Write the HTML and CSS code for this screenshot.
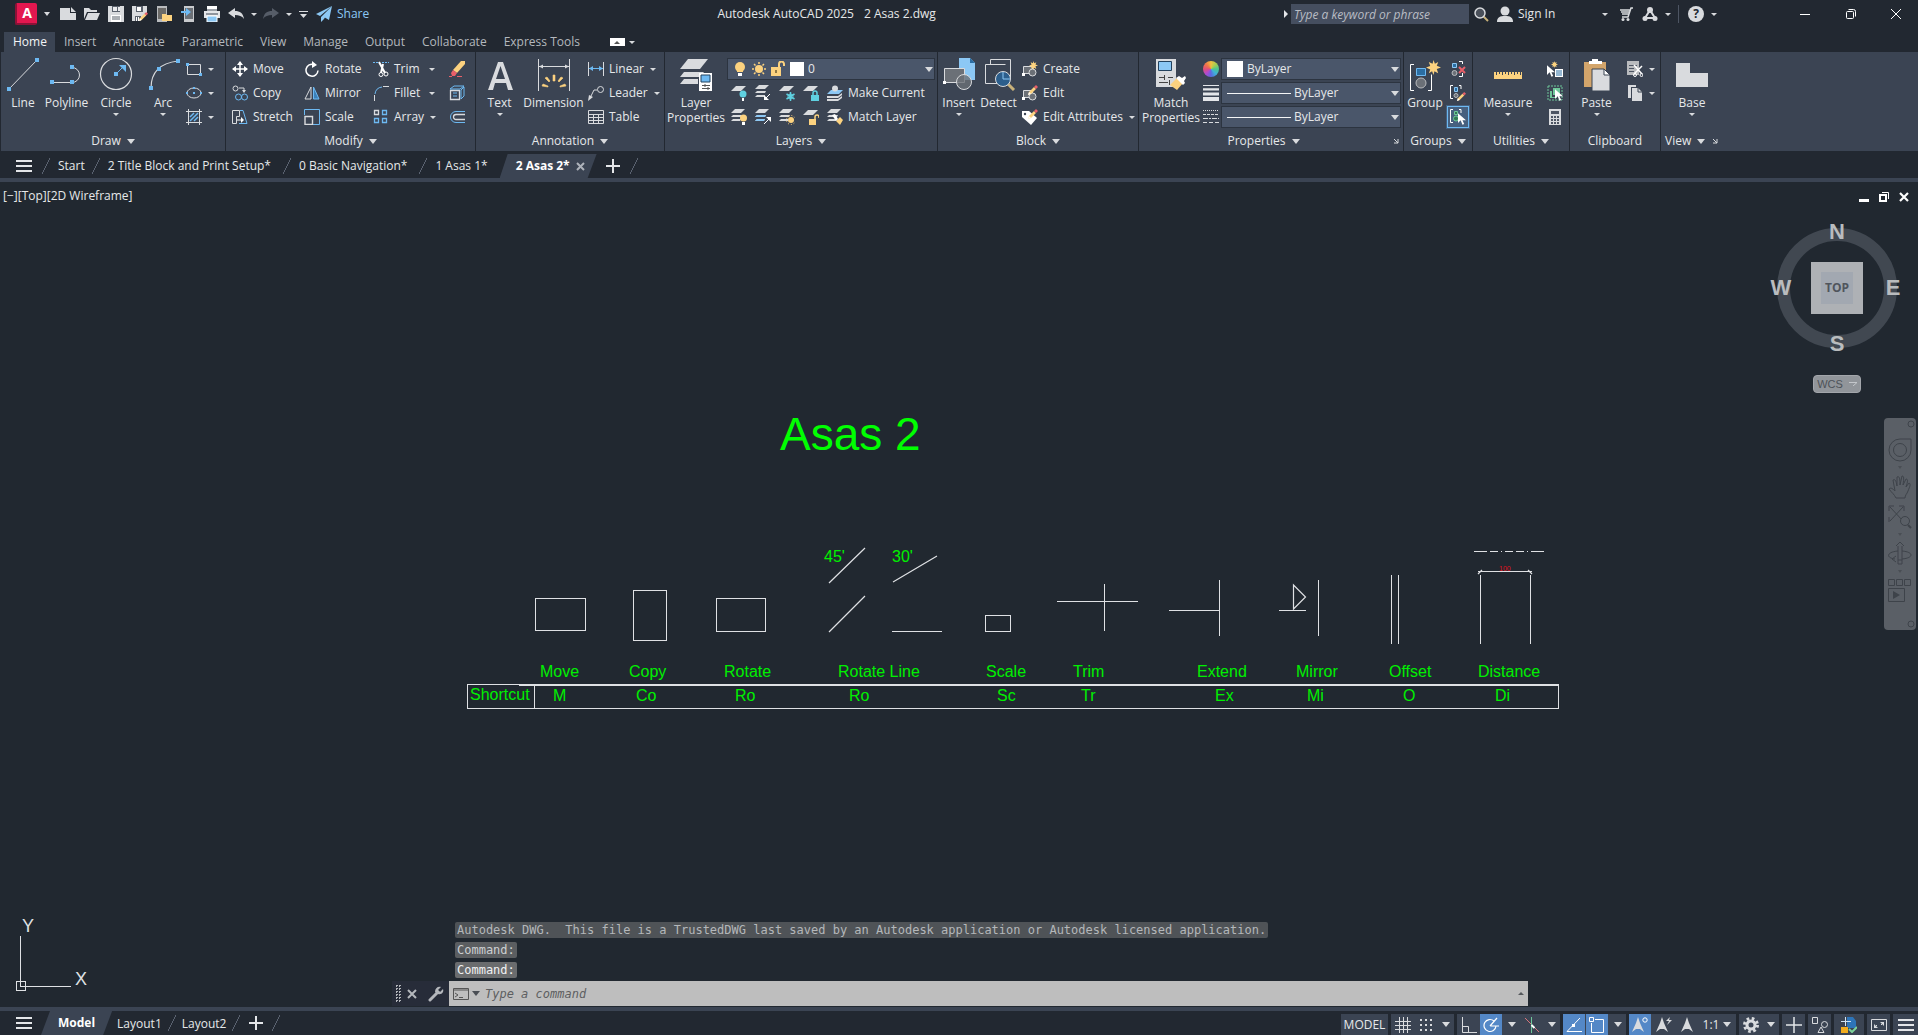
FILE: index.html
```html
<!DOCTYPE html>
<html lang="en">
<head>
<meta charset="utf-8">
<title>Autodesk AutoCAD 2025 - 2 Asas 2.dwg</title>
<link rel="stylesheet" href="styles.css">
</head>
<body>
<svg class="defs" aria-hidden="true">
  <defs>
    <symbol id="layers" viewBox="0 0 16 16"><path d="M4 0h10l-4 4H0z" fill="#d9dbde"/><path d="M2 6h9l-1 2H0zM2 10h8l-1 2H0z" fill="#d9dbde"/></symbol>
    <symbol id="sheet" viewBox="0 0 16 16"><path d="M5 1h10l-5 5H0z" fill="#d9dbde"/></symbol>
    <symbol id="pencil" viewBox="0 0 10 10"><path d="M0 10l1-3 5-5 2 2-5 5z" fill="#fcd27f"/><path d="M6 2l2-2 2 2-2 2z" fill="#e8606a"/><path d="M0 10l1-3 2 2z" fill="#fff"/></symbol>
    <symbol id="burst" viewBox="0 0 16 16"><path d="M8 0l1.500 4L13 2l-1.500 4L16 8l-4.500 1.500L13 14l-4-2-1 4-1.500-4L3 14l1.500-4L0 8l4.500-1.500L3 2l4 2z" fill="#fcd27f"/></symbol>
    <symbol id="cursor" viewBox="0 0 9 13"><path d="M0 0v11l3-3 2 5 2-1-2-4h4z" fill="#fff"/></symbol>
    <symbol id="blockshape" viewBox="0 0 16 16"><path d="M1.500 5.500h9v7h-9z" fill="#6b7077" stroke="#d9dbde"/><circle cx="10.500" cy="11.500" r="3.500" fill="#6b7077" stroke="#d9dbde"/><path d="M0 12h3v3H0z" fill="#fff"/></symbol>
    <symbol id="launch" viewBox="0 0 6 6"><path d="M1 1l4 4M5 1v4H1" fill="none" stroke="#d9dbde"/></symbol>
    <symbol id="northA" viewBox="0 0 16 16"><path d="M8 0l2 6 4 9-4-3H6l-4 3 4-9z" fill="#d9dbde"/></symbol>
    <symbol id="menu" viewBox="0 0 16 12"><path d="M0 1h16M0 6h16M0 11h16" stroke="#e4e6e9" stroke-width="2"/></symbol>
    <symbol id="plus" viewBox="0 0 14 14"><path d="M7 0v14M0 7h14" stroke="#e4e6e9" stroke-width="2"/></symbol>
  </defs>
</svg>

<header class="titlebar">
  <div class="quick">
    <button class="app" aria-label="Application menu"><span class="app-letter">A</span></button>
    <button class="drop drop-app" aria-label="Open application menu"><i class="caret mid"></i></button>
    <button class="qb" aria-label="New"><svg class="ic" viewBox="0 0 16 16"><path d="M0 2h10v5h6v7H0zM11 1l5 5h-5z" fill="#d9dbde"/></svg></button>
    <button class="qb" aria-label="Open"><svg class="ic" viewBox="0 0 16 16"><path d="M0 2h5l2 2h6v2H3L0 13zM4 7h12l-3 7H1z" fill="#d9dbde"/></svg></button>
    <button class="qb" aria-label="Save"><svg class="ic" viewBox="0 0 16 16"><path d="M0 0h16v16H0z" fill="#d9dbde"/><path d="M4 0h8v6H4z" fill="#5b626d"/><path d="M5 1h4v4H5zM10 1h2v4h-2z" fill="#e9eaec"/><path d="M3 9h10v7H3z" fill="#fff"/><path d="M4 11h8M4 13h8" stroke="#59606b"/></svg></button>
    <button class="qb" aria-label="Save As"><svg class="ic" viewBox="0 0 16 16"><path d="M0 0h15v8l-7 7H0z" fill="#d9dbde"/><path d="M4 0h7v6H4zM3 10h6v5H3z" fill="#5b626d"/><path d="M5 1h4v4H5zM4 11h1v4H4zM6 11h1v4H6z" fill="#fff"/><use href="#pencil" x="7" y="6" width="9" height="9"/></svg></button>
    <button class="qb" aria-label="Open from Web and Mobile"><svg class="ic" viewBox="0 0 16 16"><path d="M1 0h10v16H1z" fill="#b9bbbe"/><path d="M2 2h8v11H2z" fill="#6b6a68"/><path d="M6 8h4l1 1h5v6H6z" fill="#fcd27f"/></svg></button>
    <button class="qb" aria-label="Save to Web and Mobile"><svg class="ic" viewBox="0 0 16 16"><path d="M4 0h10v16H4z" fill="#c9cbce"/><path d="M5 2h8v11H5z" fill="#6b7077"/><path d="M1 5h5V2l5 4-5 4V7H1z" fill="#6db9f2"/></svg></button>
    <button class="qb" aria-label="Plot"><svg class="ic" viewBox="0 0 16 16"><path d="M3 0h10v5H3z" fill="#fff"/><path d="M0 5h16v7H0z" fill="#e4e6e9"/><path d="M3 4h10M2 8h12" stroke="#3b4453"/><path d="M3 10h10v6H3z" fill="#8cc8f5" stroke="#fff"/></svg></button>
    <button class="qb" aria-label="Undo"><svg class="ic" viewBox="0 0 16 16"><path d="M0 7l7-5v3c5 0 8 2 9 8-2-3-5-4-9-4v3z" fill="#d9dbde"/></svg></button>
    <button class="drop" aria-label="Undo list"><i class="caret"></i></button>
    <button class="qb" aria-label="Redo"><svg class="ic" viewBox="0 0 16 16"><path d="M16 7L9 2v3C4 5 1 7 0 13c2-3 5-4 9-4v3z" fill="#565d68"/></svg></button>
    <button class="drop" aria-label="Redo list"><i class="caret"></i></button>
    <button class="drop drop-wide" aria-label="Customize quick access"><svg width="9" height="7" viewBox="0 0 9 7"><path d="M0 0h9v1H0zM1 3h7L4.500 7z" fill="#d9dbde"/></svg></button>
    <button class="share"><svg class="ic" viewBox="0 0 16 16"><path d="M16 0L0 8l4 2zM16 0L5 11v5l3-3zM16 0L8 11l5 3z" fill="#8cc8f5"/></svg>Share</button>
  </div>
  <h1 class="title"><span>Autodesk AutoCAD 2025</span><span>2 Asas 2.dwg</span></h1>
  <div class="account">
    <button class="drop" aria-label="Collapse search"><svg width="4" height="8" viewBox="0 0 4 8"><path d="M0 0l4 4-4 4z" fill="#e4e6e9"/></svg></button>
    <input class="search" type="text" placeholder="Type a keyword or phrase" aria-label="Type a keyword or phrase">
    <button class="qb" aria-label="Search"><svg class="ic" viewBox="0 0 16 16"><path d="M10 10l5 5" stroke="#c9b27a" stroke-width="2"/><circle cx="7" cy="7" r="5" fill="#4a505a" stroke="#d9dbde" stroke-width="1.500"/></svg></button>
    <button class="signin"><svg class="ic" viewBox="0 0 16 16"><circle cx="8" cy="5" r="4.500" fill="#d9dbde"/><path d="M0 16c0-5 3-6 8-6s8 1 8 6z" fill="#d9dbde"/></svg><span>Sign In</span><i class="caret"></i></button>
    <button class="qb" aria-label="App store"><svg class="ic" viewBox="0 0 16 16"><path d="M15 2h-2l-3 9H4M2 4h10M3 6h9M4 8h7" fill="none" stroke="#d9dbde" stroke-width="1.500"/><circle cx="5" cy="13.500" r="1.500" fill="#d9dbde"/><circle cx="10" cy="13.500" r="1.500" fill="#d9dbde"/></svg></button>
    <button class="qb" aria-label="Autodesk account"><svg class="ic" viewBox="0 0 16 16"><path d="M8 4L3 12M8 4l5 8M4 12h8" fill="none" stroke="#d9dbde" stroke-width="2"/><circle cx="8" cy="4" r="3" fill="#d9dbde"/><circle cx="3" cy="12.500" r="2.500" fill="#d9dbde"/><circle cx="13" cy="12.500" r="2.500" fill="#d9dbde"/></svg></button>
    <button class="drop" aria-label="Account list"><i class="caret"></i></button>
    <span class="rule"></span>
    <button class="qb" aria-label="Help"><span class="help">?</span></button>
    <button class="drop" aria-label="Help list"><i class="caret"></i></button>
  </div>
  <div class="window">
    <button aria-label="Minimize"><svg width="10" height="10" viewBox="0 0 10 10"><path d="M0 5.500h10" stroke="#fff"/></svg></button>
    <button aria-label="Restore"><svg width="10" height="10" viewBox="0 0 10 10"><rect x=".5" y="2.500" width="7" height="7" rx="1" fill="none" stroke="#fff"/><path d="M2.500.5h5a2 2 0 0 1 2 2v5" fill="none" stroke="#fff"/></svg></button>
    <button aria-label="Close"><svg width="10" height="10" viewBox="0 0 10 10"><path d="M0 0l10 10M10 0L0 10" stroke="#fff"/></svg></button>
  </div>
</header>

<nav class="tabs">
  <a href="#" class="tab on">Home</a><a href="#" class="tab">Insert</a><a href="#" class="tab">Annotate</a><a href="#" class="tab">Parametric</a><a href="#" class="tab">View</a><a href="#" class="tab">Manage</a><a href="#" class="tab">Output</a><a href="#" class="tab">Collaborate</a><a href="#" class="tab">Express Tools</a>
  <button class="minimize" aria-label="Minimize ribbon"><i class="minbox"></i><i class="caret"></i></button>
</nav>

<section class="ribbon">
  <div class="panel p-draw">
    <div class="body">
      <button class="big"><svg class="bi" viewBox="0 0 34 34"><path d="M3 32L31 3" stroke="#d9dbde"/><path d="M1 30h4v4H1zM29 1h4v4h-4z" fill="#6db9f2"/></svg><span>Line</span></button>
      <button class="big"><svg class="bi" viewBox="0 0 34 34"><path d="M2 25.500h20a7.500 7.500 0 0 0 0-15" fill="none" stroke="#d9dbde"/><path d="M0 23h4v4H0zM20 23h4v4h-4zM20 8h4v4h-4z" fill="#6db9f2"/></svg><span>Polyline</span></button>
      <button class="big"><svg class="bi" viewBox="0 0 34 34"><circle cx="17" cy="17" r="15.500" fill="none" stroke="#d9dbde" stroke-width="1.200"/><path d="M15 15h4v4h-4zM20 8h7v7z" fill="#6db9f2"/><path d="M17 17l8-8" stroke="#6db9f2"/></svg><span>Circle</span><i class="caret"></i></button>
      <button class="big"><svg class="bi" viewBox="0 0 34 34"><path d="M5 31C5 15 15 6 32 4" fill="none" stroke="#d9dbde" stroke-width="1.200"/><path d="M3 29h4v4H3zM11 10h4v4h-4zM30 2h4v4h-4z" fill="#6db9f2"/></svg><span>Arc</span><i class="caret"></i></button>
      <div class="stack">
        <button class="sb" aria-label="Rectangle"><svg class="ic" viewBox="0 0 16 16"><path d="M1.500 3.500h13v10h-13z" fill="none" stroke="#d9dbde"/><path d="M0 2h3v3H0zM13 12h3v3h-3z" fill="#6db9f2"/></svg><i class="caret"></i></button>
        <button class="sb" aria-label="Ellipse"><svg class="ic" viewBox="0 0 16 16"><ellipse cx="8" cy="8" rx="7" ry="5" fill="none" stroke="#d9dbde"/><path d="M7 7h2v2H7zM0 7h2v2H0zM7 2h2v2H7zM14 7h2v2h-2z" fill="#6db9f2"/></svg><i class="caret"></i></button>
        <button class="sb" aria-label="Hatch"><svg class="ic" viewBox="0 0 16 16"><path d="M0 2.500h16M0 13.500h16M2.500 0v16M13.500 0v16" stroke="#d9dbde"/><path d="M4 8l4-4M4 12l8-8M8 12l4-4" stroke="#6db9f2" stroke-width="1.500"/></svg><i class="caret"></i></button>
      </div>
    </div>
    <button class="foot"><span>Draw</span><i class="caret wide"></i></button>
  </div>

  <div class="panel p-modify">
    <div class="body">
      <div class="stack">
        <button class="sb"><svg class="ic" viewBox="0 0 16 16"><path d="M8 1v14M1 8h14" stroke="#fff" stroke-width="1.500"/><path d="M8 0l3 4H5zM8 16l3-4H5zM0 8l4-3v6zM16 8l-4-3v6z" fill="#fff"/></svg>Move</button>
        <button class="sb"><svg class="ic" viewBox="0 0 16 16"><circle cx="3.500" cy="3.500" r="2.500" fill="none" stroke="#d9dbde"/><path d="M7 3h5v4" fill="none" stroke="#d9dbde"/><path d="M10 5h4l-2 3z" fill="#d9dbde"/><circle cx="6.500" cy="12" r="3" fill="none" stroke="#6db9f2"/><circle cx="12.500" cy="12" r="3" fill="none" stroke="#6db9f2"/></svg>Copy</button>
        <button class="sb"><svg class="ic" viewBox="0 0 16 16"><path d="M.5 1.500h7v6h-3v7h-4z" fill="none" stroke="#d9dbde"/><path d="M8 1.500h3l4 13H7" fill="none" stroke="#6db9f2"/><path d="M5 11h6" stroke="#fff"/><path d="M9 8l3 3-3 3z" fill="#fff"/></svg>Stretch</button>
      </div>
      <div class="stack">
        <button class="sb"><svg class="ic" viewBox="0 0 16 16"><path d="M10 3.500a6 6 0 1 0 4 6" fill="none" stroke="#fff" stroke-width="1.500"/><path d="M8 0l5 4-5 3z" fill="#fff"/></svg>Rotate</button>
        <button class="sb"><svg class="ic" viewBox="0 0 16 16"><path d="M7 2v12H1z" fill="none" stroke="#d9dbde"/><path d="M9.500 2v12H15z" fill="#3d81b8" stroke="#6db9f2"/></svg>Mirror</button>
        <button class="sb"><svg class="ic" viewBox="0 0 16 16"><path d="M.5.5h15v15H9M.5 6V.500" fill="none" stroke="#6db9f2"/><path d="M1 7.500h7.500v8H1z" fill="none" stroke="#d9dbde" stroke-width="1.400"/></svg>Scale</button>
      </div>
      <div class="stack">
        <button class="sb"><svg class="ic" viewBox="0 0 16 16"><path d="M0 1.500h6M9 1.500h7" stroke="#6db9f2" stroke-dasharray="2 1"/><path d="M6 1l6 11M10 3L8 12" stroke="#fff" stroke-width="2"/><circle cx="13" cy="13" r="2" fill="none" stroke="#fff"/><circle cx="8" cy="13.500" r="2" fill="none" stroke="#fff"/></svg>Trim<i class="caret far"></i></button>
        <button class="sb"><svg class="ic" viewBox="0 0 16 16"><path d="M2 9a8 8 0 0 1 7-7" fill="none" stroke="#6db9f2"/><path d="M10 1.500h6M1.500 10v6" stroke="#d9dbde"/></svg>Fillet<i class="caret far"></i></button>
        <button class="sb"><svg class="ic" viewBox="0 0 16 16"><path d="M1.500 1.500h4v4h-4z" fill="none" stroke="#d9dbde" stroke-width="1.300"/><path d="M9.500 1.500h4v4h-4zM1.500 9.500h4v4h-4zM9.500 9.500h4v4h-4z" fill="none" stroke="#6db9f2" stroke-width="1.300"/></svg>Array<i class="caret"></i></button>
      </div>
      <div class="stack">
        <button class="sb" aria-label="Erase"><svg class="ic" viewBox="0 0 16 16"><path d="M4 9l8-9h4v3l-8 9z" fill="#fcd27f"/><path d="M2 12l2-3 4 3-2 3H3z" fill="#e8606a"/><path d="M0 15.500h3M8 15.500h5" stroke="#e8606a"/></svg></button>
        <button class="sb" aria-label="Explode"><svg class="ic" viewBox="0 0 16 16"><path d="M1.500 5.500h9v9h-9z" fill="none" stroke="#d9dbde" stroke-width="1.300"/><path d="M1 4l4-3h10l-4 3zM12 14l3-3V2l-3 3zM4 8h4M4 11h4" fill="none" stroke="#6db9f2"/></svg></button>
        <button class="sb" aria-label="Offset"><svg class="ic" viewBox="0 0 16 16"><path d="M16 2.500H7a5.500 5.500 0 0 0 0 11h9" fill="none" stroke="#6db9f2"/><path d="M16 5.500H7a2.500 2.500 0 0 0 0 5h9" fill="none" stroke="#d9dbde" stroke-width="1.300"/></svg></button>
      </div>
    </div>
    <button class="foot"><span>Modify</span><i class="caret wide"></i></button>
  </div>

  <div class="panel p-annot">
    <div class="body">
      <button class="big"><svg class="bi" viewBox="0 0 34 34"><path d="M5 33L15 5h5l10 28h-5l-2-7H12l-2 7zM13 22h9L17.500 9z" fill="#d9dbde" fill-rule="evenodd"/></svg><span>Text</span><i class="caret"></i></button>
      <button class="big"><svg class="bi" viewBox="0 0 34 34"><path d="M1.500 2v32M32.500 2v32M2 9.500h30" stroke="#d9dbde"/><path d="M2 9.500l4-2v4zM32 9.500l-4-2v4z" fill="#d9dbde"/><path d="M16 18h2v6h-2zM8 21l2-1 3 4-1 1zM26 21l-2-1-3 4 1 1zM5 29l1-2 5 2v1zM29 29l-1-2-5 2v1z" fill="#fcd27f" stroke="#fcd27f" stroke-width=".6"/></svg><span>Dimension</span></button>
      <div class="stack">
        <button class="sb"><svg class="ic" viewBox="0 0 16 16"><path d="M.5 1v14M15.500 1v14" stroke="#d9dbde"/><path d="M1 7.500h14" stroke="#6db9f2"/><path d="M1 7.500L5 5v5zM15 7.500L11 5v5z" fill="#6db9f2"/></svg>Linear<i class="caret"></i></button>
        <button class="sb"><svg class="ic" viewBox="0 0 16 16"><circle cx="12.500" cy="4.500" r="3" fill="none" stroke="#d9dbde"/><path d="M9 5H6L2 13" fill="none" stroke="#d9dbde"/><path d="M0 16l1-6 4 2z" fill="#d9dbde"/></svg>Leader<i class="caret"></i></button>
        <button class="sb"><svg class="ic" viewBox="0 0 16 16"><path d="M.5 1.500h15v13H.5zM.5 5.500h15M.5 8.500h15M.5 11.500h15M5.500 5v9M10.500 5v9" fill="none" stroke="#d9dbde"/></svg>Table</button>
      </div>
    </div>
    <button class="foot"><span>Annotation</span><i class="caret wide"></i></button>
  </div>

  <div class="panel p-layers">
    <div class="body">
      <button class="big"><svg class="bi" viewBox="0 0 34 34"><path d="M9 2h20l-8 10H1z" fill="#d9dbde"/><path d="M5 15h20l-4 5H1zM5 22h14v5H1z" fill="#d9dbde"/><path d="M20 16h13v18H20z" fill="#fff"/><path d="M22 18h9v7h-9z" fill="#6db9f2" stroke="#23425e"/><path d="M23 28.500h8M23 31.500h8M26 27v3M29 30v3" stroke="#555"/></svg><span>Layer<br>Properties</span></button>
      <div class="stack">
        <div class="row"><div class="combo combo-layer">
          <svg class="ci" viewBox="0 0 14 16"><circle cx="7" cy="6" r="5" fill="#fcd27f"/><path d="M4 9h6v2H4z" fill="#fcd27f"/><path d="M5 12h4v3H5z" fill="#fff"/></svg>
          <svg class="ci" viewBox="0 0 14 16"><circle cx="7" cy="8" r="4" fill="#fcd27f"/><path d="M7 1v2M7 13v2M0 8h2M12 8h2M2 3l1.500 1.500M10.500 11.500L12 13M12 3l-1.500 1.500M3.500 11.500L2 13" stroke="#fcd27f" stroke-width="1.500"/></svg>
          <svg class="ci" viewBox="0 0 14 16"><path d="M0 6h10v9H0z" fill="#fcd27f"/><path d="M8 7V3a2.500 2.500 0 0 1 5 0v2" fill="none" stroke="#fcd27f" stroke-width="2"/><path d="M5 9v3" stroke="#6b5a30" stroke-width="1.500"/></svg>
          <svg class="ci" viewBox="0 0 14 16"><path d="M0 1h14v14H0z" fill="#fff"/></svg>
          <select aria-label="Layer"><option>0</option></select><i class="caret wide"></i>
        </div></div>
        <div class="row">
          <button class="sb" aria-label="Layer off"><svg class="ic" viewBox="0 0 16 16"><use href="#sheet" y="0"/><circle cx="12" cy="9" r="3.500" fill="#5fd0e0"/><path d="M11 13h2v3h-2z" fill="#fff"/></svg></button>
          <button class="sb" aria-label="Isolate layer"><svg class="ic" viewBox="0 0 16 16"><use href="#layers"/><path d="M15 9l-5 5" stroke="#fff"/><path d="M9 15v-5l5 5z" fill="#fff"/></svg></button>
          <button class="sb" aria-label="Freeze layer"><svg class="ic" viewBox="0 0 16 16"><use href="#sheet"/><path d="M11.500 7v9M7.500 9l8 5M15.500 9l-8 5" stroke="#5fd0e0" stroke-width="1.500"/><circle cx="11.500" cy="11.500" r="2.500" fill="none" stroke="#5fd0e0"/></svg></button>
          <button class="sb" aria-label="Lock layer"><svg class="ic" viewBox="0 0 16 16"><use href="#sheet"/><path d="M8 10h8v6H8z" fill="#5fd0e0"/><path d="M10 10V8a2 2 0 0 1 4 0v2" fill="none" stroke="#5fd0e0" stroke-width="1.500"/></svg></button>
          <button class="sb"><svg class="ic" viewBox="0 0 16 16"><path d="M4 5h12l-4 4H0z" fill="#8cc8f5"/><circle cx="8" cy="3.500" r="3" fill="#d9dbde"/><path d="M0 11h11l4-3v2l-4 3H0zM0 14h11l4-3v2l-4 3H0z" fill="#d9dbde"/></svg>Make Current</button>
        </div>
        <div class="row">
          <button class="sb" aria-label="Turn all layers on"><svg class="ic" viewBox="0 0 16 16"><use href="#layers"/><circle cx="12.500" cy="9" r="3.500" fill="#fcd27f"/><path d="M11 13h3v3h-3z" fill="#fff"/></svg></button>
          <button class="sb" aria-label="Unisolate layer"><svg class="ic" viewBox="0 0 16 16"><use href="#layers"/><path d="M2 6h9l-1 2H0zM2 10h8l-1 2H0z" fill="#8cc8f5"/><path d="M9 15l5-5" stroke="#fff"/><path d="M11 8h5v5z" fill="#fff"/></svg></button>
          <button class="sb" aria-label="Thaw all layers"><svg class="ic" viewBox="0 0 16 16"><use href="#layers"/><circle cx="12" cy="11" r="3" fill="#fcd27f"/><circle cx="12" cy="11" r="4.500" fill="none" stroke="#fcd27f" stroke-dasharray="1 2"/></svg></button>
          <button class="sb" aria-label="Unlock layer"><svg class="ic" viewBox="0 0 16 16"><use href="#sheet"/><path d="M6 10h7v6H6z" fill="#fcd27f"/><path d="M12 10V8a2 2 0 0 1 4 0v1" fill="none" stroke="#fcd27f" stroke-width="1.500"/></svg></button>
          <button class="sb"><svg class="ic" viewBox="0 0 16 16"><use href="#layers"/><path d="M9 12l4-4 3 3-3 5z" fill="#fcd27f"/><path d="M5 6l3-1 3 5-2 2z" fill="#fff"/></svg>Match Layer</button>
        </div>
      </div>
    </div>
    <button class="foot"><span>Layers</span><i class="caret wide"></i></button>
  </div>

  <div class="panel p-block">
    <div class="body">
      <button class="big"><svg class="bi" viewBox="0 0 34 34"><path d="M17 1h11l5 5v17H17z" fill="#8cc8f5"/><path d="M28 1v5h5z" fill="#2b6ea3"/><path d="M2.500 11.500h20v14h-20z" fill="#6b7077" stroke="#d9dbde"/><circle cx="22" cy="25" r="7.500" fill="#6b7077" fill-opacity=".8" stroke="#d9dbde"/><path d="M1 24h3v3H1z" fill="#fff"/></svg><span>Insert</span><i class="caret"></i></button>
      <button class="big"><svg class="bi" viewBox="0 0 34 34"><path d="M8.500 8V2.500h20V22M3.500 7.500h20M3.500 7.500v19h12" fill="none" stroke="#d9dbde"/><path d="M26 27l6 6" stroke="#c9b27a" stroke-width="3"/><circle cx="21" cy="22" r="7.500" fill="#2b5e8c" stroke="#d9dbde"/><path d="M21 15v7h7" fill="none" stroke="#8cc8f5"/></svg><span>Detect</span></button>
      <div class="stack">
        <button class="sb"><svg class="ic" viewBox="0 0 16 16"><use href="#blockshape"/><use href="#burst" x="7" y="0" width="9" height="9"/></svg>Create</button>
        <button class="sb"><svg class="ic" viewBox="0 0 16 16"><use href="#blockshape"/><use href="#pencil" x="6" y="0" width="10" height="10"/></svg>Edit</button>
        <button class="sb"><svg class="ic" viewBox="0 0 16 16"><path d="M0 2h7l8 7-6 7-9-8z" fill="#fff"/><circle cx="3" cy="5" r="1.200" fill="#3b4453"/><use href="#pencil" x="6" y="0" width="10" height="10"/></svg>Edit Attributes<i class="caret"></i></button>
      </div>
    </div>
    <button class="foot"><span>Block</span><i class="caret wide"></i></button>
  </div>

  <div class="panel p-props">
    <div class="body">
      <button class="big"><svg class="bi" viewBox="0 0 34 34"><path d="M2 2h20v28H2z" fill="#d9dbde"/><path d="M4.500 4.500h13v9h-13z" fill="#8cc8f5" stroke="#23425e"/><path d="M5 20.500h6M14 20.500h5M5 25.500h9M10.500 18v5M15.500 23v5" stroke="#444"/><path d="M16 28l7-7 6 5-6 7z" fill="#fcd27f"/><path d="M22 21l3-2 3 2 3-2 1 2-2 3 1 2-2 2z" fill="#fff"/></svg><span>Match<br>Properties</span></button>
      <div class="stack">
        <div class="row"><span class="wheel"></span><div class="combo combo-color"><i class="swatch"></i><select aria-label="Object color"><option>ByLayer</option></select><i class="caret wide"></i></div></div>
        <div class="row"><svg class="ic" viewBox="0 0 16 16"><path d="M0 .5h16M0 4h16M0 8.500h16M0 14h16" stroke="#e4e6e9"/><path d="M0 4.500h16" stroke="#e4e6e9" stroke-width="2"/><path d="M0 9h16" stroke="#e4e6e9" stroke-width="3"/><path d="M0 14h16" stroke="#e4e6e9" stroke-width="4"/></svg><div class="combo"><i class="line"></i><select aria-label="Lineweight"><option>ByLayer</option></select><i class="caret wide"></i></div></div>
        <div class="row"><svg class="ic" viewBox="0 0 16 16"><path d="M0 1.500h16" stroke="#d9dbde" stroke-dasharray="1 1"/><path d="M0 5.500h16" stroke="#d9dbde" stroke-dasharray="3 1"/><path d="M0 9.500h16" stroke="#d9dbde" stroke-dasharray="5 1 2 1"/><path d="M0 13.500h16" stroke="#d9dbde" stroke-dasharray="4 2"/></svg><div class="combo"><i class="line"></i><select aria-label="Linetype"><option>ByLayer</option></select><i class="caret wide"></i></div></div>
      </div>
    </div>
    <div class="footrow"><button class="foot"><span>Properties</span><i class="caret wide"></i></button><button class="dialog" aria-label="Properties dialog"><svg width="6" height="6"><use href="#launch"/></svg></button></div>
  </div>

  <div class="panel p-groups">
    <div class="body">
      <button class="big"><svg class="bi" viewBox="0 0 34 34"><path d="M6 7.500H2.500v26H6M20 33.500h3.500v-16M21 33.500h2" fill="none" stroke="#fff"/><path d="M8.500 11.500h9v7h-9z" fill="#2b6ea3" stroke="#6db9f2"/><circle cx="13" cy="26" r="5" fill="#6b7077" stroke="#b9bbbe"/><use href="#burst" x="18" y="3" width="15" height="15"/></svg><span>Group</span></button>
      <div class="stack">
        <button class="sb" aria-label="Ungroup"><svg class="ic" viewBox="0 0 16 16"><path d="M2.500 2.500h4v4h-4z" fill="#2b6ea3" stroke="#8cc8f5"/><circle cx="4.500" cy="12" r="2.500" fill="#6b7077" stroke="#b9bbbe"/><path d="M9 .500h3.500V3M12.500 12v3.500H9" fill="none" stroke="#fff"/><path d="M9 6l6 6M15 6l-6 6" stroke="#e8606a" stroke-width="2"/></svg></button>
        <button class="sb" aria-label="Group edit"><svg class="ic" viewBox="0 0 16 16"><path d="M3 .5H.500v13H3M9 .500h2V4" fill="none" stroke="#fff"/><path d="M4.500 2.500h3v4h-3z" fill="#2b6ea3" stroke="#8cc8f5"/><circle cx="6" cy="10.500" r="2" fill="#6b7077" stroke="#b9bbbe"/><use href="#pencil" x="7" y="7" width="9" height="9"/></svg></button>
        <button class="sb picked" aria-label="Group selection on/off"><svg class="ic" viewBox="0 0 16 16"><path d="M3 .5H.500v13H3M9 .500h2V4" fill="none" stroke="#fff"/><path d="M4.500 2.500h3v3h-3z" fill="#2f7a55" stroke="#6fc79a"/><circle cx="6" cy="9.500" r="2.500" fill="#2f7a55" stroke="#6fc79a"/><use href="#cursor" x="8" y="4" width="8" height="12"/></svg></button>
      </div>
    </div>
    <button class="foot"><span>Groups</span><i class="caret wide"></i></button>
  </div>

  <div class="panel p-utils">
    <div class="body">
      <button class="big"><svg class="bi" viewBox="0 0 34 34"><path d="M3 15h28v7H3z" fill="#fcd27f"/><path d="M5.500 15v3M8.500 15v2M11.500 15v3M14.500 15v2M17.500 15v3M20.500 15v2M23.500 15v3M26.500 15v2M29.500 15v3" stroke="#3b4453"/></svg><span>Measure</span><i class="caret"></i></button>
      <div class="stack">
        <button class="sb" aria-label="Quick select"><svg class="ic" viewBox="0 0 16 16"><path d="M8 8h8v8H8z" fill="#fff"/><path d="M9 10h6M9 12h6M9 14h6" stroke="#2b6ea3"/><use href="#cursor" x="0" y="4" width="8" height="12"/><use href="#burst" x="4" y="0" width="7" height="7"/></svg></button>
        <button class="sb" aria-label="Select all"><svg class="ic" viewBox="0 0 16 16"><path d="M1 1h14v14H1z" fill="none" stroke="#6fc79a" stroke-dasharray="2 1"/><path d="M6 3h7v7H6zM3 6h2v6h5v1H3z" fill="#6fc79a"/><use href="#cursor" x="8" y="4" width="8" height="12"/></svg></button>
        <button class="sb" aria-label="Quick calculator"><svg class="ic" viewBox="0 0 16 16"><path d="M2 0h12v16H2z" fill="#d9dbde"/><path d="M4 2h8v3H4zM4 7h2v2H4zM7 7h2v2H7zM10 7h2v2h-2zM4 10h2v2H4zM7 10h2v2H7zM10 10h2v2h-2zM4 13h2v2H4zM7 13h2v2H7zM10 13h2v2h-2z" fill="#4d5563"/></svg></button>
      </div>
    </div>
    <button class="foot"><span>Utilities</span><i class="caret wide"></i></button>
  </div>

  <div class="panel p-clip">
    <div class="body">
      <button class="big"><svg class="bi" viewBox="0 0 34 34"><path d="M4 5h22v25H4z" fill="#d3a56b"/><path d="M12 2h6v2h4v3H9V4h3z" fill="#fff"/><path d="M12 12h12l6 6v16H12z" fill="#d9dbde" stroke="#3b4453"/><path d="M24 12v6h6z" fill="#fff" stroke="#3b4453"/></svg><span>Paste</span><i class="caret"></i></button>
      <div class="stack">
        <button class="sb" aria-label="Cut"><svg class="ic" viewBox="0 0 16 16"><path d="M0 0h12v14H0z" fill="#b9bbbe"/><path d="M2 4.500h8M2 7.500h5M2 10.500h5" stroke="#4d5563"/><path d="M7 4l8 9M15 5l-8 8" stroke="#fff" stroke-width="1.500"/><circle cx="8" cy="14" r="1.500" fill="none" stroke="#fff"/><circle cx="14.500" cy="14" r="1.500" fill="none" stroke="#fff"/></svg><i class="caret"></i></button>
        <button class="sb" aria-label="Copy clip"><svg class="ic" viewBox="0 0 16 16"><path d="M1 0h8v2H4v11H1z" fill="#d9dbde"/><path d="M5 3h6l4 4v9H5z" fill="#d9dbde"/><path d="M11 3v4h4" fill="none" stroke="#3b4453"/></svg><i class="caret"></i></button>
      </div>
    </div>
    <div class="foot"><span>Clipboard</span></div>
  </div>

  <div class="panel p-view">
    <div class="body">
      <button class="big"><svg class="bi" viewBox="0 0 34 34"><path d="M1 6h14v10h18v14H1z" fill="#d9dbde"/></svg><span>Base</span><i class="caret"></i></button>
    </div>
    <div class="footrow"><button class="foot"><span>View</span><i class="caret wide"></i></button><button class="dialog" aria-label="View dialog"><svg width="6" height="6"><use href="#launch"/></svg></button></div>
  </div>
</section>

<nav class="files">
  <button class="burger" aria-label="File tab menu"><svg width="16" height="12"><use href="#menu"/></svg></button>
  <a href="#" class="file f-start">Start</a>
  <a href="#" class="file">2 Title Block and Print Setup*</a>
  <a href="#" class="file">0 Basic Navigation*</a>
  <a href="#" class="file">1 Asas 1*</a>
  <span class="file-on"><a href="#">2 Asas 2*</a><button aria-label="Close tab"><svg width="9" height="9" viewBox="0 0 9 9"><path d="M1 1l7 7M8 1L1 8" stroke="#aeb3bb" stroke-width="2"/></svg></button></span>
  <button class="add" aria-label="New tab"><svg width="14" height="14"><use href="#plus"/></svg></button>
  <i class="slash"></i>
</nav>

<main class="canvas">
  <svg class="drawing" role="img" aria-label="Model space">
    <g fill="none" stroke="#dfe1e4" shape-rendering="crispEdges">
      <path d="M535.500 416.500h50v32h-50zM633.500 408.500h33v50h-33zM716.500 416.500h49v33h-49zM892 449.500h50M985.500 433.500h25v16h-25z"/>
      <path d="M1057 419.500h81M1104.500 402v47M1169 428.500h50M1219.500 398v56M1279 428.500h27M1318.500 398v56M1391.500 393v69M1398.500 393v69M1480.500 393v69M1530.500 393v69M1478 389.500h54"/>
      <path d="M1474 369.500h13M1490 369.500h8M1501 369.500h1M1505 369.500h8M1516 369.500h8M1527 369.500h1M1531 369.500h13"/>
      <path d="M467.500 502.500h1091v24H467.500zM519 503.500h1040M534.500 503v23"/>
      <path d="M20.500 754v50h50M16.500 799.500h9v9h-9z"/>
    </g>
    <path d="M829 401l36-35M893 400l44-26M829 450l36-36M1293.500 403v24l12-12zM1478 392l4-4M1528 388l4 4" fill="none" stroke="#dfe1e4" stroke-width="1.200"/>
    <text class="axis" x="22" y="750">Y</text><text class="axis" x="75" y="803">X</text>
    <g class="note">
      <text class="heading" x="780" y="268">Asas 2</text>
      <text x="824" y="380">45'</text><text x="892" y="380">30'</text>
      <text x="540" y="495">Move</text><text x="629" y="495">Copy</text><text x="724" y="495">Rotate</text><text x="838" y="495">Rotate Line</text><text x="986" y="495">Scale</text><text x="1073" y="495">Trim</text><text x="1197" y="495">Extend</text><text x="1296" y="495">Mirror</text><text x="1389" y="495">Offset</text><text x="1478" y="495">Distance</text>
      <text x="470" y="518">Shortcut</text><text x="553" y="519">M</text><text x="636" y="519">Co</text><text x="735" y="519">Ro</text><text x="849" y="519">Ro</text><text x="997" y="519">Sc</text><text x="1081" y="519">Tr</text><text x="1215" y="519">Ex</text><text x="1307" y="519">Mi</text><text x="1403" y="519">O</text><text x="1495" y="519">Di</text>
    </g>
    <text class="dim" x="1499" y="389">100</text>
  </svg>

  <div class="viewlabel"><button>[−]</button><button>[Top]</button><button>[2D Wireframe]</button></div>

  <div class="childwin">
    <button aria-label="Minimize drawing"><svg width="10" height="10" viewBox="0 0 10 10"><path d="M0 7h10v3H0z" fill="#fff"/></svg></button>
    <button aria-label="Restore drawing"><svg width="10" height="10" viewBox="0 0 10 10"><path d="M1 3h6v6H1z" fill="none" stroke="#fff" stroke-width="2"/><path d="M3 .500h6.500V7" fill="none" stroke="#fff"/></svg></button>
    <button aria-label="Close drawing"><svg width="10" height="10" viewBox="0 0 10 10"><path d="M1 1l8 8M9 1L1 9" stroke="#fff" stroke-width="2.200"/></svg></button>
  </div>

  <div class="cube">
    <span class="n">N</span><span class="w">W</span><button class="face"><span>TOP</span></button><span class="e">E</span><span class="s">S</span>
  </div>
  <button class="wcs">WCS<svg width="8" height="4" viewBox="0 0 8 4"><path d="M0 .500h8L4 4" fill="none" stroke="#c3c6ca"/></svg></button>

  <div class="navbar">
    <button class="dot" aria-label="Close navigation bar"><svg width="8" height="8" viewBox="0 0 8 8"><circle cx="4" cy="4" r="3" fill="none" stroke="#3e434a"/></svg></button>
    <button class="nb" aria-label="Full navigation wheel"><svg width="24" height="24" viewBox="0 0 24 24"><path d="M12 1h11v11A11 11 0 1 1 12 1z" fill="none" stroke="#3e434a"/><circle cx="12" cy="12" r="6.500" fill="none" stroke="#3e434a"/></svg><i class="caret dark"></i></button>
    <button class="nb" aria-label="Pan"><svg width="24" height="24" viewBox="0 0 24 24"><path d="M8 23c-2-4-4-5-7-9 2-2 4 0 6 2L5 5c2-1 3 0 4 6V2c2-1 3 0 3 8l2-9c2 0 2 2 1 9l3-6c2 0 2 2 0 8l3-4c2 1 1 3-1 8-1 3-3 4-3 7z" fill="none" stroke="#3e434a"/></svg></button>
    <button class="nb" aria-label="Zoom"><svg width="24" height="24" viewBox="0 0 24 24"><path d="M2 2l13 14M15 2L2 16M1 6V1h5M11 1h5v5M1 12v5" fill="none" stroke="#3e434a"/><circle cx="17" cy="16" r="4.500" fill="#5a5f66" stroke="#3e434a"/><path d="M20 20l3 3" stroke="#3e434a" stroke-width="2"/></svg><i class="caret dark"></i></button>
    <button class="nb" aria-label="Orbit"><svg width="24" height="24" viewBox="0 0 24 24"><path d="M10 4v14M14 4v14M8 4l4-4 4 4M10 18h4v4h-4z" fill="none" stroke="#3e434a"/><path d="M10 9C-2 10-2 16 7 17M14 9c12 1 12 7 0 8M8 14l-4 3 4 3" fill="none" stroke="#3e434a"/></svg><i class="caret dark"></i></button>
    <button class="nb" aria-label="ShowMotion"><svg width="24" height="24" viewBox="0 0 24 24"><path d="M.5.500h6v6h-6zM8.500.500h6v6h-6zM16.500.500h6v6h-6zM.5 9.500h16v13H.5z" fill="none" stroke="#3e434a"/><path d="M5 12v8l7-4z" fill="#3e434a"/></svg></button>
    <button class="dot end" aria-label="Customize navigation bar"><svg width="8" height="8" viewBox="0 0 8 8"><circle cx="4" cy="4" r="3" fill="none" stroke="#3e434a"/></svg></button>
  </div>

  <section class="command">
    <ol class="history"><li class="h1">Autodesk DWG.&nbsp; This file is a TrustedDWG last saved by an Autodesk application or Autodesk licensed application.</li><li class="h2">Command:</li><li class="h3">Command:</li></ol>
    <div class="cmdline">
      <span class="grip"></span>
      <button class="cx" aria-label="Close command line"><svg width="10" height="10" viewBox="0 0 10 10"><path d="M1 1l8 8M9 1L1 9" stroke="#b4b7bc" stroke-width="2"/></svg></button>
      <button class="cw" aria-label="Customize"><svg width="16" height="16" viewBox="0 0 16 16"><path d="M2 14l8-8" stroke="#b4b7bc" stroke-width="3" stroke-linecap="round"/><path d="M13 1L10 4l2 2 3-3c1 3-1 6-5 5L7 6c0-4 3-6 6-5z" fill="#b4b7bc"/></svg></button>
      <label class="prompt"><svg width="16" height="12" viewBox="0 0 16 12"><path d="M.5.500h15v11H.5zM0 2h16" fill="none" stroke="#555"/><path d="M2 5l3 2-3 2M6 9.500h4" fill="none" stroke="#555"/></svg><i class="caret wide dark"></i><input type="text" placeholder="Type a command" aria-label="Type a command"><i class="caret up"></i></label>
    </div>
  </section>
</main>

<footer class="status">
  <nav class="layouts">
    <button class="burger" aria-label="Layout menu"><svg width="16" height="12"><use href="#menu"/></svg></button>
    <a href="#" class="layout-on">Model</a>
    <a href="#" class="layout">Layout1</a><i class="slash"></i>
    <a href="#" class="layout">Layout2</a><i class="slash"></i>
    <button class="add" aria-label="New layout"><svg width="14" height="14"><use href="#plus"/></svg></button><i class="slash"></i>
  </nav>
  <div class="toggles">
    <div class="grp"><button class="model">MODEL</button></div>
    <div class="grp"><button aria-label="Grid"><svg class="ic" viewBox="0 0 16 16"><path d="M4.500 0v16M8.500 0v16M12.500 0v16M0 4.500h16M0 8.500h16M0 12.500h16" stroke="#d9dbde"/></svg></button><button aria-label="Snap"><svg class="ic" viewBox="0 0 16 16"><path d="M2 2h2v2H2zM7 2h2v2H7zM12 2h2v2h-2zM2 7h2v2H2zM7 7h2v2H7zM12 7h2v2h-2zM2 12h2v2H2zM7 12h2v2H7zM12 12h2v2h-2z" fill="#d9dbde"/></svg></button><button class="dd" aria-label="Snap list"><i class="caret wide"></i></button></div>
    <div class="grp"><button aria-label="Ortho"><svg class="ic" viewBox="0 0 16 16"><path d="M1.500 0v15.500H16M1.500 9.500h6v6" fill="none" stroke="#d9dbde"/></svg></button><button class="lit" aria-label="Polar tracking"><svg class="ic" viewBox="0 0 16 16"><path d="M11 4a6 6 0 1 0 2 5M7 9h9M7 9l7-8" fill="none" stroke="#fff" stroke-width="1.200"/></svg></button><button class="dd" aria-label="Polar list"><i class="caret wide"></i></button><button aria-label="Isometric drafting"><svg class="ic" viewBox="0 0 16 16"><path d="M1 1l14 14" stroke="#d8767c"/><path d="M7.500 0v16" stroke="#6fc79a"/><path d="M7.500 8l3 3" stroke="#fff" stroke-width="2"/></svg></button><button class="dd" aria-label="Isometric list"><i class="caret wide"></i></button></div>
    <div class="grp"><button class="lit" aria-label="Object snap tracking"><svg class="ic" viewBox="0 0 16 16"><path d="M14 1L1 14.500h15" fill="none" stroke="#fff"/><path d="M6 7h3v3H6z" fill="#fff"/></svg></button><button class="lit" aria-label="Object snap"><svg class="ic" viewBox="0 0 16 16"><path d="M6 2.500h8.500v13h-12V6" fill="none" stroke="#fff"/><path d="M.5.500h4v4h-4z" fill="none" stroke="#fff"/></svg></button><button class="dd" aria-label="Snap modes"><i class="caret wide"></i></button></div>
    <div class="grp"><button class="lit" aria-label="Annotation visibility"><svg class="ic" viewBox="0 0 16 16"><use href="#northA" x="-2" width="16" height="16"/><circle cx="13" cy="3" r="2.200" fill="none" stroke="#fff"/></svg></button><button aria-label="Auto scale"><svg class="ic" viewBox="0 0 16 16"><use href="#northA" x="-2" width="16" height="16"/><path d="M14 0l-4 4h3l-2 4 5-5h-3z" fill="#d9dbde"/></svg></button><button aria-label="Annotation scale"><svg class="ic" viewBox="0 0 16 16"><use href="#northA" width="16" height="16"/></svg></button><button class="scale">1:1<i class="caret wide"></i></button></div>
    <div class="grp"><button aria-label="Workspace"><svg class="ic" viewBox="0 0 16 16"><circle cx="8" cy="8" r="4" fill="none" stroke="#d9dbde" stroke-width="3"/><circle cx="8" cy="8" r="6.500" fill="none" stroke="#d9dbde" stroke-width="3" stroke-dasharray="2.600 2.500"/></svg></button><button class="dd" aria-label="Workspace list"><i class="caret wide"></i></button></div>
    <div class="grp"><button aria-label="Annotation monitor"><svg class="ic" viewBox="0 0 16 16"><path d="M8 0v16M0 8h16" stroke="#e4e6e9" stroke-width="1.500"/></svg></button></div>
    <div class="grp"><button aria-label="Isolate objects"><svg class="ic" viewBox="0 0 16 16"><path d="M.5.500h5v6h-5zM6 15.500h6L9 10z" fill="none" stroke="#d9dbde"/><circle cx="12.500" cy="7.500" r="3" fill="none" stroke="#d9dbde"/></svg></button></div>
    <div class="grp"><button class="gfx" aria-label="Graphics performance"><svg class="ic" viewBox="0 0 16 16"><path d="M6 0h6l3 4v7H6z" fill="#2d74b8"/><path d="M4.500 0v9M0 4.500h10" stroke="#cfe4f6"/><path d="M0 10h7v6H0z" fill="#f2ac1e"/><path d="M8 12l3 3 5-5" fill="none" stroke="#7dd39a" stroke-width="2"/></svg></button></div>
    <div class="grp"><button aria-label="Clean screen"><svg class="ic" viewBox="0 0 16 16"><path d="M.5 2.500h15v11H.5z" fill="none" stroke="#d9dbde"/><path d="M9 5h4v4zM3 7v4h4z" fill="#d9dbde"/><path d="M10 8l2-2M4 10l2-2" stroke="#d9dbde"/></svg></button></div>
    <div class="grp"><button aria-label="Customization"><svg width="16" height="12"><use href="#menu"/></svg></button></div>
  </div>
</footer>
</body>
</html>
```
FILE: styles.css
```css
* { box-sizing: border-box; }
body {
  margin: 0;
  height: 100vh;
  display: flex;
  flex-direction: column;
  overflow: hidden;
  background: #222831;
  color: #e6e8ea;
  font: 12px/16px "Open Sans", "Noto Sans", sans-serif;
}
button, select, input { font: inherit; color: inherit; border: 0; padding: 0; margin: 0; background: none; border-radius: 0; }
button { display: flex; align-items: center; justify-content: center; white-space: nowrap; }
a { color: inherit; text-decoration: none; white-space: nowrap; }
svg { display: block; flex: none; }
.defs { position: absolute; width: 0; height: 0; }
.ic { width: 16px; height: 16px; }

.caret { flex: none; width: 0; height: 0; border: 3px solid transparent; border-top-color: #d9dbde; border-bottom: 0; }
.caret.mid { border-width: 4px 3px 0; }
.caret.wide { border-width: 5px 4px 0; }
.caret.dark { border-top-color: #4a4e54; }
.caret.up { border-style: solid; border-width: 0 3px 3px; border-color: transparent transparent #55585c; }

/* title bar */
.titlebar { display: flex; height: 28px; flex: none; }
.quick, .account, .window { display: flex; align-items: center; }
.quick { padding-left: 15px; }
.app { width: 22px; height: 22px; background: #e3174f; border-left: 2px solid #8d1237; border-bottom: 2px solid #8d1237; border-radius: 2px; }
.app-letter { font-size: 14px; font-weight: 700; color: #fff; }
.qb { width: 24px; height: 24px; }
.drop { width: 11px; height: 24px; }
.drop-app { width: 19px; }
.drop-wide { width: 18px; }
.share { gap: 5px; padding: 0 4px; color: #8cc8f5; }
.title { flex: 1; margin: 0; display: flex; align-items: center; justify-content: center; gap: 10px; font-size: 12px; font-weight: 400; }
.search { width: 178px; height: 20px; padding: 0 3px; background: #454e5f; }
.search::placeholder { color: #b9bdc4; font-style: italic; opacity: 1; font-size: 12px; }
.signin { width: 121px; padding: 0 6px 0 4px; gap: 5px; height: 24px; }
.signin .caret { margin-left: auto; }
.rule { width: 1px; height: 18px; background: #4d5563; margin: 0 5px; }
.help { width: 16px; height: 16px; border-radius: 8px; background: #d9dbde; color: #222831; font-weight: 700; line-height: 16px; text-align: center; }
.window { padding-left: 63px; }
.window button { width: 46px; height: 28px; }
.window button:last-child { width: 44px; }

/* ribbon tabs */
.tabs { display: flex; height: 24px; flex: none; padding: 4px 0 0 4px; }
.tab { padding: 2px 8px 0 9px; height: 20px; color: #b4b8be; }
.tab.on { background: #3b4453; color: #f4f5f6; }
.minimize { margin-left: 22px; gap: 4px; }
.minbox { width: 15px; height: 8px; background: #fff; display: flex; align-items: center; justify-content: center; }
.minbox::before { content: ""; border: 3px solid transparent; border-top: 0; border-bottom-color: #555; }

/* ribbon panels */
.ribbon { display: flex; flex: none; height: 99px; background: #3b4453; border-left: 1px solid #222831; }
.panel { flex: none; border-right: 1px solid #222831; display: flex; flex-direction: column; }
.body { flex: 1; display: grid; padding-top: 5px; }
.p-draw { width: 225px; }
.p-draw .body { grid-template-columns: 44px 43px 56px 38px 1fr; }
.p-modify { width: 250px; }
.p-modify .body { grid-template-columns: 72px 69px 76px 1fr; padding-left: 2px; }
.p-annot { width: 189px; }
.p-annot .body { grid-template-columns: 47px 61px 1fr; }
.p-layers { width: 273px; }
.p-layers .body { grid-template-columns: 62px 1fr; padding-right: 2px; }
.p-block { width: 201px; }
.p-block .body { grid-template-columns: 41px 39px 1fr; }
.p-props { width: 265px; }
.p-props .body { grid-template-columns: 64px 1fr; padding-right: 2px; }
.p-groups { width: 69px; }
.p-groups .body { grid-template-columns: 42px 24px; }
.p-utils { width: 97px; }
.p-utils .body { grid-template-columns: 70px 24px; }
.p-clip { width: 91px; }
.p-clip .body { grid-template-columns: 53px 1fr; }
.p-view { flex: 1; border-right: 0; }
.p-view .body { grid-template-columns: 62px; }

.big { flex-direction: column; justify-content: flex-start; line-height: 15px; height: 72px; }
.big span { margin-top: 4px; text-align: center; white-space: nowrap; }
.big .caret { margin-top: 3px; }
.bi { width: 34px; height: 34px; }
.stack { display: flex; flex-direction: column; }
.row { display: flex; align-items: center; height: 24px; }
.sb { height: 24px; padding: 0 4px; gap: 5px; justify-content: flex-start; }
.sb .caret { margin-left: 1px; }
.sb .far { margin-left: 4px; }
.picked { background: #46607f; outline: 1px solid #6db9f2; outline-offset: -2px; }
.combo { flex: 1; height: 22px; display: flex; align-items: center; background: #4a566a; border: 1px solid #2c3440; padding: 0 1px 0 5px; }
.combo select { flex: 1; min-width: 0; height: 20px; appearance: none; outline: 0; }
.combo-layer select { padding-left: 4px; }
.combo-color select { padding-left: 4px; }
.ci { width: 14px; height: 16px; margin-right: 5px; }
.ci:nth-of-type(4) { margin-right: 0; }
.swatch { width: 16px; height: 16px; background: #fff; }
.line { width: 64px; height: 1px; background: #f4f5f6; margin-right: 3px; }
.p-props .row { gap: 2px; }
.wheel { width: 16px; height: 16px; border-radius: 8px; background: conic-gradient(#f0c040, #a8cc50, #4cc490, #3fb0d8, #5a6ae0, #b04ad0, #e0507a, #f07848, #f0c040); }
.foot { height: 22px; gap: 6px; width: 100%; display: flex; align-items: center; justify-content: center; padding-top: 2px; }
.footrow { display: flex; }
.footrow .foot { flex: 1; }
.dialog { width: 15px; height: 22px; padding-top: 2px; }
.p-view .footrow { padding-left: 4px; gap: 2px; }
.p-view .foot { flex: none; width: auto; }

/* drawing file tabs */
.files { display: flex; align-items: center; height: 31px; flex: none; padding: 3px 0 0 16px; border-bottom: 4px solid #3b4453; }
.burger { width: 16px; margin-right: 10px; height: 24px; }
.file { padding-right: 12px; display: flex; align-items: center; height: 24px; }
.file::before, .slash { content: ""; width: 8px; height: 16px; margin-right: 8px; background: linear-gradient(to bottom right, transparent 46%, #5a6270 46%, #5a6270 54%, transparent 54%); flex: none; }
.f-start { padding-right: 7px; }
.file-on { display: flex; align-items: center; gap: 6px; height: 24px; padding: 0 12px 0 16px; background: #3b4453; clip-path: polygon(8px 0, 100% 0, calc(100% - 9px) 100%, 0 100%); font-weight: 700; color: #fff; }
.files .add { margin: 0 10px 0 9px; }

/* model space */
.canvas { flex: 1; position: relative; min-height: 0; background: #212830; overflow: hidden; }
.drawing { width: 100%; height: 100%; }
.note { fill: #00f000; font-family: "Liberation Sans", Arial, sans-serif; font-size: 16px; }
.heading { font-size: 46px; fill: #00ff00; }
.axis { fill: #dfe1e4; font: 18px "Liberation Sans", Arial, sans-serif; }
.dim { fill: #e0101c; font: 7px "Liberation Sans", Arial, sans-serif; }
.viewlabel { position: absolute; left: 3px; top: 6px; display: flex; }
.childwin { position: absolute; right: 9px; top: 10px; display: flex; gap: 10px; }
.cube { position: absolute; right: 12px; top: 37px; width: 138px; height: 138px; display: grid; grid-template: 26px 1fr 26px / 26px 1fr 26px; place-items: center; font: 700 22px/22px "Liberation Sans", Arial, sans-serif; color: #b9bcbe; }
.cube::before { content: ""; position: absolute; inset: 9px; border: 13px solid #414851; border-radius: 50%; }
.cube span, .face { position: relative; }
.n, .s { grid-column: 2; }
.n { grid-row: 1; }
.s { grid-row: 3; }
.w { grid-area: 2 / 1; }
.e { grid-area: 2 / 3; }
.face { grid-area: 2 / 2; width: 52px; height: 52px; background: #aeb1b5; }
.face span { width: 32px; height: 32px; background: #a2a8b1; color: #50555d; font: 700 12px/32px "Open Sans", sans-serif; }
.wcs { position: absolute; right: 57px; top: 193px; width: 48px; height: 18px; gap: 6px; border-radius: 4px; background: #91959a; border: 1px solid #a3a6ab; color: #4d5258; font: 11px "Liberation Sans", Arial, sans-serif; }
.navbar { position: absolute; right: 2px; top: 236px; width: 32px; height: 212px; padding: 2px 1px; border-radius: 4px; background: #5a5f66; display: flex; flex-direction: column; gap: 6px; }
.nb { flex-direction: column; gap: 4px; width: 30px; }
.nb .caret { border-width: 3px 2px 0; }
.dot { align-self: flex-end; margin-bottom: 4px; }
.dot.end { margin: auto 0 0; }

/* command line */
.command { position: absolute; left: 392px; right: 390px; bottom: 1px; }
.history { list-style: none; margin: 0 0 3px 63px; padding: 0; display: flex; flex-direction: column; align-items: flex-start; gap: 4px; font: 12px/16px "DejaVu Sans Mono", monospace; }
.history li { background: #4f5357; border-radius: 2px; padding: 0 2px; white-space: nowrap; color: #b4b7ba; }
.history .h2 { background: #5b5e61; color: #cdd0d2; }
.history .h3 { background: #6a6c6e; color: #f1f2f3; }
.cmdline { display: flex; align-items: center; height: 25px; background: #272c39; }
.grip { width: 6px; height: 18px; margin-left: 3px; background: conic-gradient(#b4b7bc 25%, transparent 0) 0 0 / 3px 3px; }
.cx { width: 21px; }
.cw { width: 27px; height: 24px; }
.prompt { flex: 1; height: 25px; background: #bebebe; display: flex; align-items: center; gap: 3px; padding: 0 4px; }
.prompt input { flex: 1; padding-left: 2px; outline: 0; font: italic 12px "DejaVu Sans Mono", monospace; color: #333; }
.prompt input::placeholder { color: #5d5f61; opacity: 1; }

/* status bar */
.status { flex: none; height: 28px; border-top: 4px solid #3b4453; display: flex; justify-content: space-between; }
.layouts { display: flex; align-items: center; padding: 0 0 0 16px; }
.layouts .burger { margin-right: 9px; }
.layout-on { padding: 4px 17px 0 17px; height: 24px; background: #3b4453; clip-path: polygon(9px 0, 100% 0, calc(100% - 9px) 100%, 0 100%); font-weight: 700; color: #fff; }
.layout { padding: 2px 6px 0 5px; }
.layouts .slash { margin-right: 0; }
.layouts .slash + .layout { padding-left: 6px; }
.layouts .add { margin: 0 9px; height: 24px; }
.toggles { display: flex; gap: 3px; padding-top: 3px; }
.grp { display: flex; background: #3b4453; }
.grp button { width: 23px; height: 21px; }
.grp .dd { width: 17px; }
.grp .model { width: 47px; }
.grp .lit { background: #5488c7; border-right: 1px solid #3b4453; }
.grp .scale { width: 38px; gap: 4px; }
.grp .gfx { width: 30px; }
.grp:last-child button { width: 25px; }
```
